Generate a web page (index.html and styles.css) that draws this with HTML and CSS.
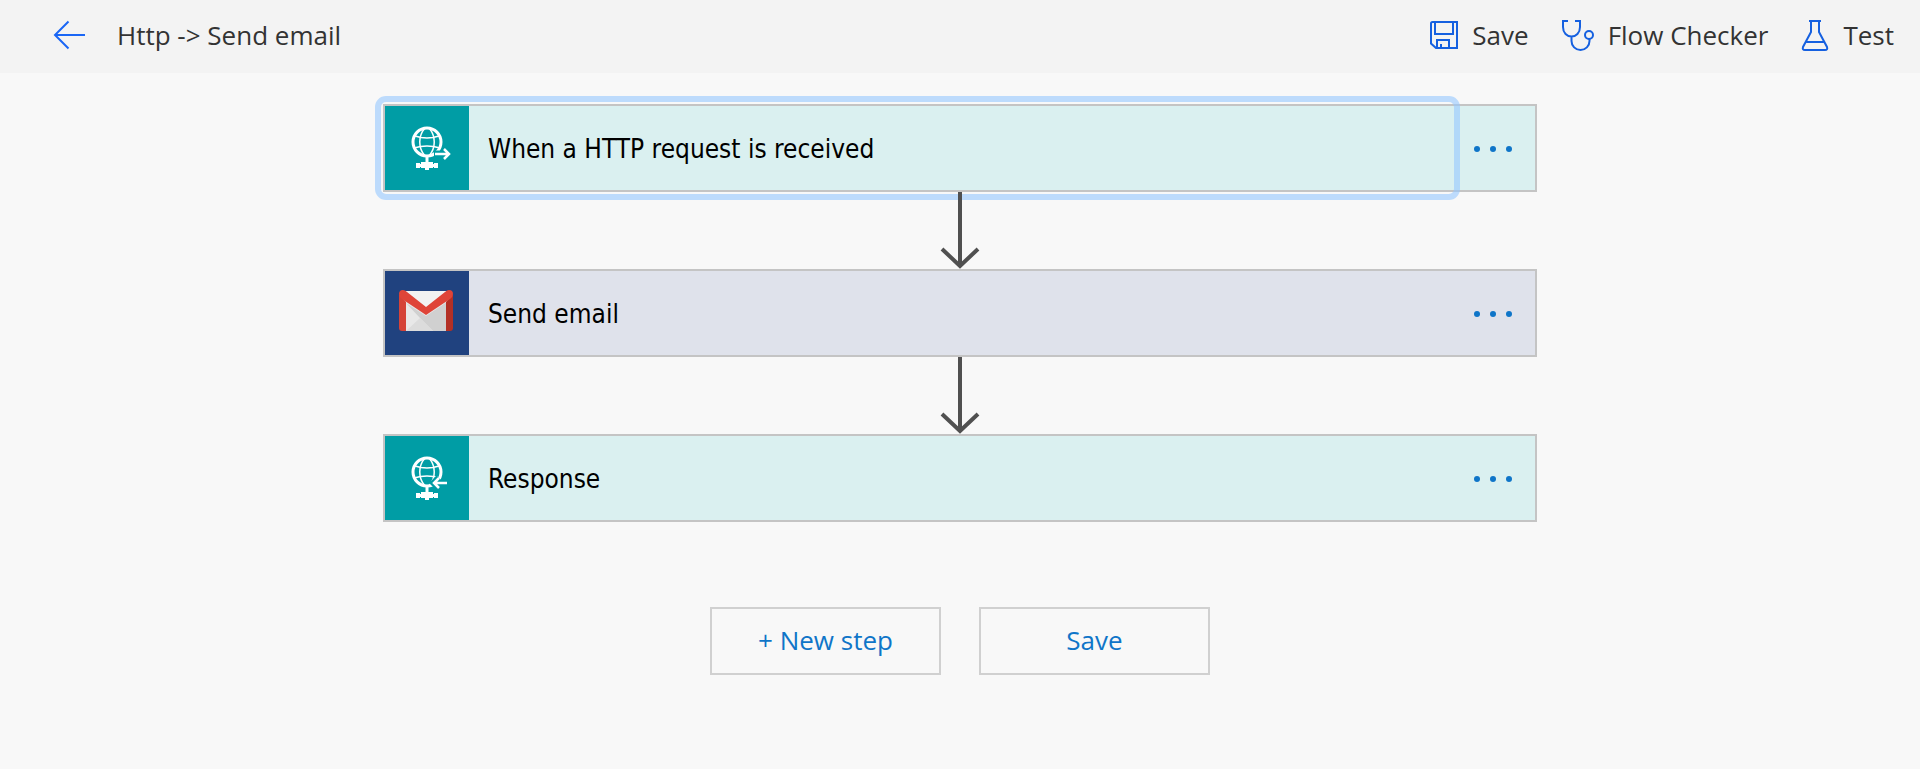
FILE: index.html
```
<!DOCTYPE html>
<html lang="en">
<head>
<meta charset="utf-8">
<title>Http -&gt; Send email</title>
<link rel="stylesheet" href="styles.css">
</head>
<body>
<header class="topbar">
  <button class="back" type="button" aria-label="Back">
    <svg width="32" height="30" viewBox="0 0 32 30"><path d="M15.500 1.500L2 15l13.500 13.500M2 15h30"/></svg>
  </button>
  <h1 class="title">Http -&gt; Send email</h1>
  <nav class="commands">
    <button class="command" type="button">
      <svg width="28" height="28" viewBox="0 0 28 28"><path d="M2.500 1h24.500v26H6L1 22.500V2.500Q1 1 2.500 1zM5 1v12h18V1M7 27v-8h12v8M11 27v-4"/></svg>
      <span>Save</span>
    </button>
    <button class="command" type="button">
      <svg width="32" height="32" viewBox="0 0 32 32"><path d="M6 2H1v6c0 6 4 9.500 8.500 9.500S18 14 18 8V2h-5M9.500 17.500V22c0 5 4 9 9 9s9-4 9-9v-2"/><circle cx="27" cy="16" r="4"/></svg>
      <span>Flow Checker</span>
    </button>
    <button class="command" type="button">
      <svg width="28" height="32" viewBox="0 0 28 32"><path d="M8 2h12M10 2v11L2 28q-1 3 2 3h20q3 0 2-3L18 13V2M5.500 23h17"/></svg>
      <span>Test</span>
    </button>
  </nav>
</header>
<main class="flow">
  <section class="card teal focused">
    <button class="card-main" type="button">
      <span class="tile">
        <svg width="84" height="84" viewBox="0 0 84 84"><g class="globe"><circle class="rim" cx="42" cy="36" r="14"/><path d="M40 22c-7 8-7 20 0 28M44 22c7 8 7 20 0 28M30 30q12 4 24 0M29 42q13-4 26 0"/><path class="rim" d="M42 50v6"/></g><path class="base" d="M31 57h4v1h1v-2h12v2h1v-1h4v5h-4v-1h-1v1h-4v2h-4v-2h-4v-1h-1v1h-4z"/><path class="halo" d="M49 48h13"/><path class="arrow" d="M50 48h13M59 43l5 5-5 5"/></svg>
      </span>
      <span class="label">When a HTTP request is received</span>
    </button>
    <button class="more" type="button" aria-label="More options"><i></i><i></i><i></i></button>
  </section>
  <svg class="connector" width="40" height="77" viewBox="0 0 40 77"><path d="M20 0v74M2 57l18 17 18-17"/></svg>
  <section class="card mail">
    <button class="card-main" type="button">
      <span class="tile">
        <svg width="84" height="84" viewBox="-14 -19 84 84"><path fill="#e8e8e8" d="M4 1h46v40H4z"/><path fill="#d0d0d0" d="M7 13l14 15L34 41h14V12L27 26z"/><path fill="#dcdcdc" d="M21 28L7 41h27z"/><path fill="#f2f2f2" d="M6 1h42L27 18z"/><path fill="#d54338" d="M0 4v34q0 3 3 3h4V12z"/><path fill="#b33025" d="M54 4v34q0 3-3 3h-4V12z"/><path fill="#df4438" d="M0 4Q0 0 4 0q2 0 4 2l19 15L46 2q2-2 4-2 4 0 4 4 0 3-3 5L27 25 3 9Q0 7 0 4z"/></svg>
      </span>
      <span class="label">Send email</span>
    </button>
    <button class="more" type="button" aria-label="More options"><i></i><i></i><i></i></button>
  </section>
  <svg class="connector" width="40" height="77" viewBox="0 0 40 77"><path d="M20 0v74M2 57l18 17 18-17"/></svg>
  <section class="card teal">
    <button class="card-main" type="button">
      <span class="tile">
        <svg width="84" height="84" viewBox="0 0 84 84"><g class="globe"><circle class="rim" cx="42" cy="36" r="14"/><path d="M40 22c-7 8-7 20 0 28M44 22c7 8 7 20 0 28M30 30q12 4 24 0M29 42q13-4 26 0"/><path class="rim" d="M42 50v6"/></g><path class="base" d="M31 57h4v1h1v-2h12v2h1v-1h4v5h-4v-1h-1v1h-4v2h-4v-2h-4v-1h-1v1h-4z"/><path class="halo" d="M50 47h10M54 42l-5 5 5 5"/><path class="arrow" d="M49 47h13M54 42l-5 5 5 5"/></svg>
      </span>
      <span class="label">Response</span>
    </button>
    <button class="more" type="button" aria-label="More options"><i></i><i></i><i></i></button>
  </section>
  <div class="actions">
    <button class="action" type="button">+ New step</button>
    <button class="action" type="button">Save</button>
  </div>
</main>
</body>
</html>
```
FILE: styles.css
```
* { box-sizing: border-box; }
body {
  margin: 0;
  min-height: 100vh;
  background: #f8f8f8;
  color: #333;
  font-family: "Open Sans", "Noto Sans", sans-serif;
}
button {
  margin: 0;
  padding: 0;
  border: 0;
  background: none;
  color: inherit;
  font: inherit;
  cursor: pointer;
}
svg { display: block; flex: none; }
.topbar {
  display: flex;
  align-items: center;
  height: 73px;
  padding: 0 26px 4px 53px;
  background: #f3f3f3;
  font-size: 26px;
}
.topbar svg {
  fill: none;
  stroke: #1560e0;
  stroke-width: 2;
}
.topbar .back svg { stroke: #1a66f5; }
.title {
  margin: 0 auto 0 32px;
  font-size: 26px;
  font-weight: 400;
}
.commands { display: flex; gap: 33px; }
.command {
  display: flex;
  align-items: center;
  gap: 14px;
}
.flow {
  display: flex;
  flex-direction: column;
  align-items: center;
  padding: 31px 24px;
}
.card {
  display: flex;
  width: 100%;
  max-width: 1154px;
  height: 88px;
  border: 2px solid #c4c4c4;
  color: #000;
  font-family: "DejaVu Sans Condensed", "Noto Sans", sans-serif;
  font-size: 26px;
}
.teal { background: #daf0f0; }
.mail { background: #dfe2eb; }
.card-main {
  display: flex;
  flex: 1;
  align-items: center;
  gap: 19px;
}
.label { padding-top: 2px; }
.focused .card-main {
  outline: 6px solid rgba(150, 200, 255, 0.6);
  outline-offset: 4px;
  border-radius: 1px;
}
.tile {
  width: 84px;
  height: 84px;
}
.teal .tile { background: #009da5; }
.mail .tile { background: #20427f; }
.globe { fill: none; stroke: #fff; stroke-width: 1.500; }
.rim { stroke-width: 3; }
.base { fill: #fff; }
.halo { fill: none; stroke: #009da5; stroke-width: 7; }
.arrow { fill: none; stroke: #fff; stroke-width: 2.500; }
.more {
  display: flex;
  align-items: center;
  justify-content: center;
  gap: 10px;
  width: 85px;
  padding-top: 2px;
}
.more i {
  width: 6px;
  height: 6px;
  border-radius: 50%;
  background: #0f75c8;
}
.connector {
  position: relative;
  fill: none;
  stroke: #505050;
  stroke-width: 4;
}
.actions {
  display: flex;
  gap: 38px;
  margin-top: 85px;
}
.action {
  width: 231px;
  height: 68px;
  padding-bottom: 2px;
  border: 2px solid #d0d0d0;
  color: #0f75c8;
  font-size: 26px;
}
```
